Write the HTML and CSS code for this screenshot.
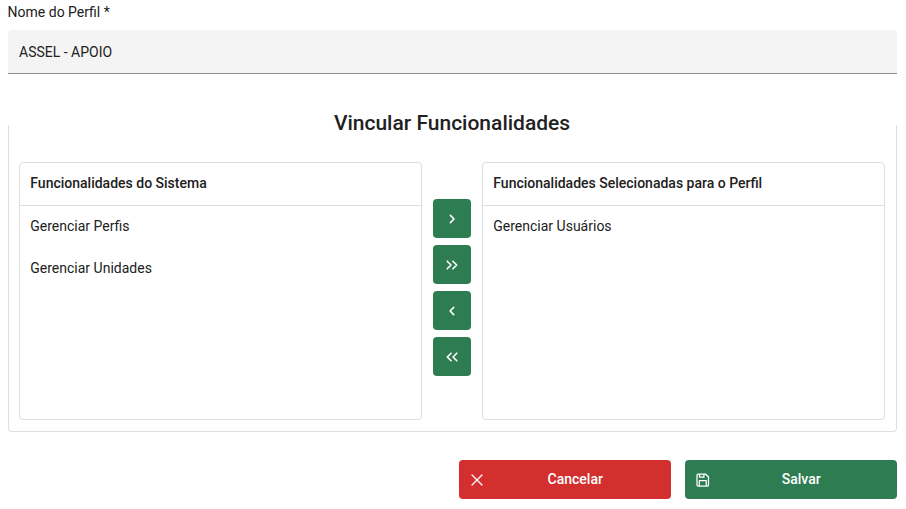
FILE: index.html
```html
<!DOCTYPE html>
<html lang="pt-BR">
<head>
<meta charset="utf-8">
<title>Perfil</title>
<link rel="stylesheet" href="styles.css">
</head>
<body>
<form class="profile">
  <label class="label" for="nome">Nome do Perfil *</label>
  <input class="input" id="nome" type="text" value="ASSEL - APOIO">
  <section class="panel">
    <h2 class="title">Vincular Funcionalidades</h2>
    <div class="picklist">
      <div class="list">
        <div class="list-header">Funcionalidades do Sistema</div>
        <ul class="items"><li>Gerenciar Perfis</li><li>Gerenciar Unidades</li></ul>
      </div>
      <div class="controls">
        <button type="button" class="move" aria-label="Adicionar"><svg viewBox="0 0 14 14"><path d="M5.400 3.400 9 7 5.400 10.600"/></svg></button>
        <button type="button" class="move" aria-label="Adicionar todos"><svg viewBox="0 0 14 14"><path d="M2.200 3.200 6 7 2.200 10.800M7.900 3.200 11.700 7 7.900 10.800"/></svg></button>
        <button type="button" class="move" aria-label="Remover"><svg viewBox="0 0 14 14"><path d="M8.700 3.400 5.100 7l3.600 3.600"/></svg></button>
        <button type="button" class="move" aria-label="Remover todos"><svg viewBox="0 0 14 14"><path d="M6.100 3.200 2.300 7l3.800 3.800M11.800 3.200 8 7l3.800 3.800"/></svg></button>
      </div>
      <div class="list">
        <div class="list-header">Funcionalidades Selecionadas para o Perfil</div>
        <ul class="items"><li>Gerenciar Usuários</li></ul>
      </div>
    </div>
  </section>
  <div class="actions">
    <button type="button" class="action cancel"><svg viewBox="0 0 14 14"><path d="M2 2l10 10M12 2 2 12"/></svg><span>Cancelar</span></button>
    <button type="button" class="action save"><svg viewBox="0 0 14 14"><path d="M2.100 1h7.400L12.500 4v8a1.100 1.100 0 0 1-1.100 1.100H2.100A1.100 1.100 0 0 1 1 12V2.100A1.100 1.100 0 0 1 2.100 1zM3.500 1v3.200h4.400V1M3.300 13V7.700h7V13"/></svg><span>Salvar</span></button>
  </div>
</form>
</body>
</html>
```
FILE: styles.css
```css
* { box-sizing: border-box; }

body {
  margin: 0;
  background: #fff;
  color: #212121;
  font: 14px/17px Roboto, "Liberation Sans", sans-serif;
}

.profile {
  display: flex;
  flex-direction: column;
  padding: 4px 9px 10px 8px;
}

.label { margin: 0 0 9px -0.400px; }

.input {
  height: 44px;
  padding: 0 11px;
  border: 0;
  border-bottom: 1px solid #8f8f8f;
  border-radius: 4px 4px 0 0;
  background: #f4f4f4;
  color: inherit;
  font: inherit;
  outline: 0;
}

.panel {
  height: 307px;
  margin-top: 51px;
  padding: 0 11px 11px 10px;
  border: 1px solid #dedede;
  border-top: 0;
  border-radius: 0 0 4px 4px;
}

.title {
  height: 24px;
  margin: -14px 0 27px;
  font-size: 21px;
  font-weight: 500;
  line-height: 24px;
  text-align: center;
}

.picklist {
  display: grid;
  grid-template-columns: 1fr 38px 1fr;
  column-gap: 11px;
  height: 258px;
}

.list {
  border: 1px solid #dedede;
  border-radius: 4px;
}

.list-header {
  height: 43px;
  padding: 12px 10.300px;
  border-bottom: 1px solid #dedede;
  font-weight: 500;
}

.items {
  margin: 0;
  padding: 0;
  list-style: none;
}

.items li {
  height: 42px;
  padding: 12px 10.300px;
}

.controls {
  display: flex;
  flex-direction: column;
  gap: 7px;
  padding-top: 37px;
}

.move,
.action {
  display: flex;
  align-items: center;
  justify-content: center;
  height: 39px;
  padding: 0;
  border: 0;
  border-radius: 4px;
  background: #2e7d52;
  color: #fff;
  font: inherit;
  font-weight: 500;
}

svg {
  width: 14px;
  height: 14px;
  fill: none;
  stroke: currentColor;
  stroke-width: 1.600;
  stroke-linecap: round;
  stroke-linejoin: round;
}

.actions {
  display: flex;
  justify-content: flex-end;
  gap: 14px;
  margin-top: 28px;
}

.action {
  width: 212px;
  padding: 0 11px 0 10.500px;
}

.action svg { stroke-width: 1.250; }

.action span {
  flex: 1;
  padding-left: 7px;
  text-align: center;
}

.cancel { background: #d32f2f; }
```
